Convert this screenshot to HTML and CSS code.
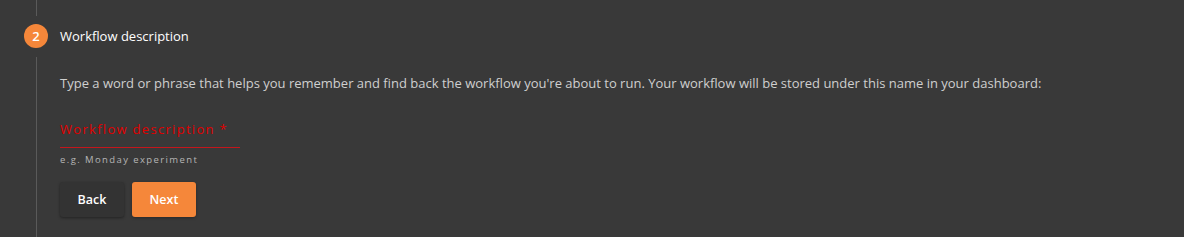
FILE: index.html
```html
<!DOCTYPE html>
<html>
<head>
    <title>workflow</title>
    <link rel="stylesheet" href="styles.css">
</head>
<body>
    <div class="step">
        <div class="rail">
            <div class="line top"></div>
            <div class="num">2</div>
            <div class="line"></div>
        </div>
        <div class="content">
            <div class="title">Workflow description</div>
            <p class="desc">Type a word or phrase that helps you remember and find back the workflow you're about to run. Your workflow will be stored under this name in your dashboard:</p>
            <div class="field">
                <label class="lab">Workflow description *</label>
                <input class="ipt" type="text">
                <div class="hint">e.g. Monday experiment</div>
            </div>
            <div class="actions">
                <button class="btn back">Back</button>
                <button class="btn next">Next</button>
            </div>
        </div>
    </div>
</body>
</html>
```
FILE: styles.css
```css
* {
    margin: 0;
    padding: 0;
    box-sizing: border-box;
}

body {
    background-color: #393939;
    font-family: "Open Sans", sans-serif;
    height: 237px;
    overflow: hidden;
}

.step {
    display: flex;
    height: 237px;
}

.rail {
    width: 60px;
    display: flex;
    flex-direction: column;
    align-items: center;
    padding-left: 24px;
    padding-right: 12px;
}

.line {
    width: 1px;
    flex: 1;
    background-color: #5a5a5a;
}

.line.top {
    flex: none;
    height: 16px;
}

.num {
    width: 24px;
    height: 24px;
    margin: 8px 0 9px;
    border-radius: 50%;
    background-color: #f5873a;
    color: #fff;
    font-size: 13px;
    font-weight: 600;
    line-height: 24px;
    text-align: center;
}

.content {
    padding-top: 27px;
}

.title {
    color: #fff;
    font-size: 13px;
    line-height: 18px;
}

.desc {
    margin-top: 29px;
    color: #cfcfcf;
    font-size: 13px;
    line-height: 18px;
}

.field {
    width: 180px;
    margin-top: 28px;
}

.lab {
    display: block;
    color: #e00000;
    font-size: 13px;
    letter-spacing: 1.3px;
    line-height: 18px;
}

.ipt {
    display: block;
    width: 100%;
    height: 10px;
    border: none;
    border-bottom: 1px solid #c4161c;
    background: transparent;
}

.hint {
    margin-top: 6px;
    color: #b5b5b5;
    font-size: 9.5px;
    letter-spacing: 1.4px;
    line-height: 12px;
}

.actions {
    display: flex;
    gap: 8px;
    margin-top: 16px;
}

.btn {
    width: 64px;
    height: 35px;
    border: none;
    border-radius: 3px;
    color: #fff;
    font-family: "Open Sans", sans-serif;
    font-size: 12.5px;
    font-weight: 600;
}

.back {
    background-color: #333;
    box-shadow: 0 1px 3px rgba(0, 0, 0, 0.4);
}

.next {
    background-color: #f5873a;
    box-shadow: 0 1px 3px rgba(0, 0, 0, 0.3);
}
```
